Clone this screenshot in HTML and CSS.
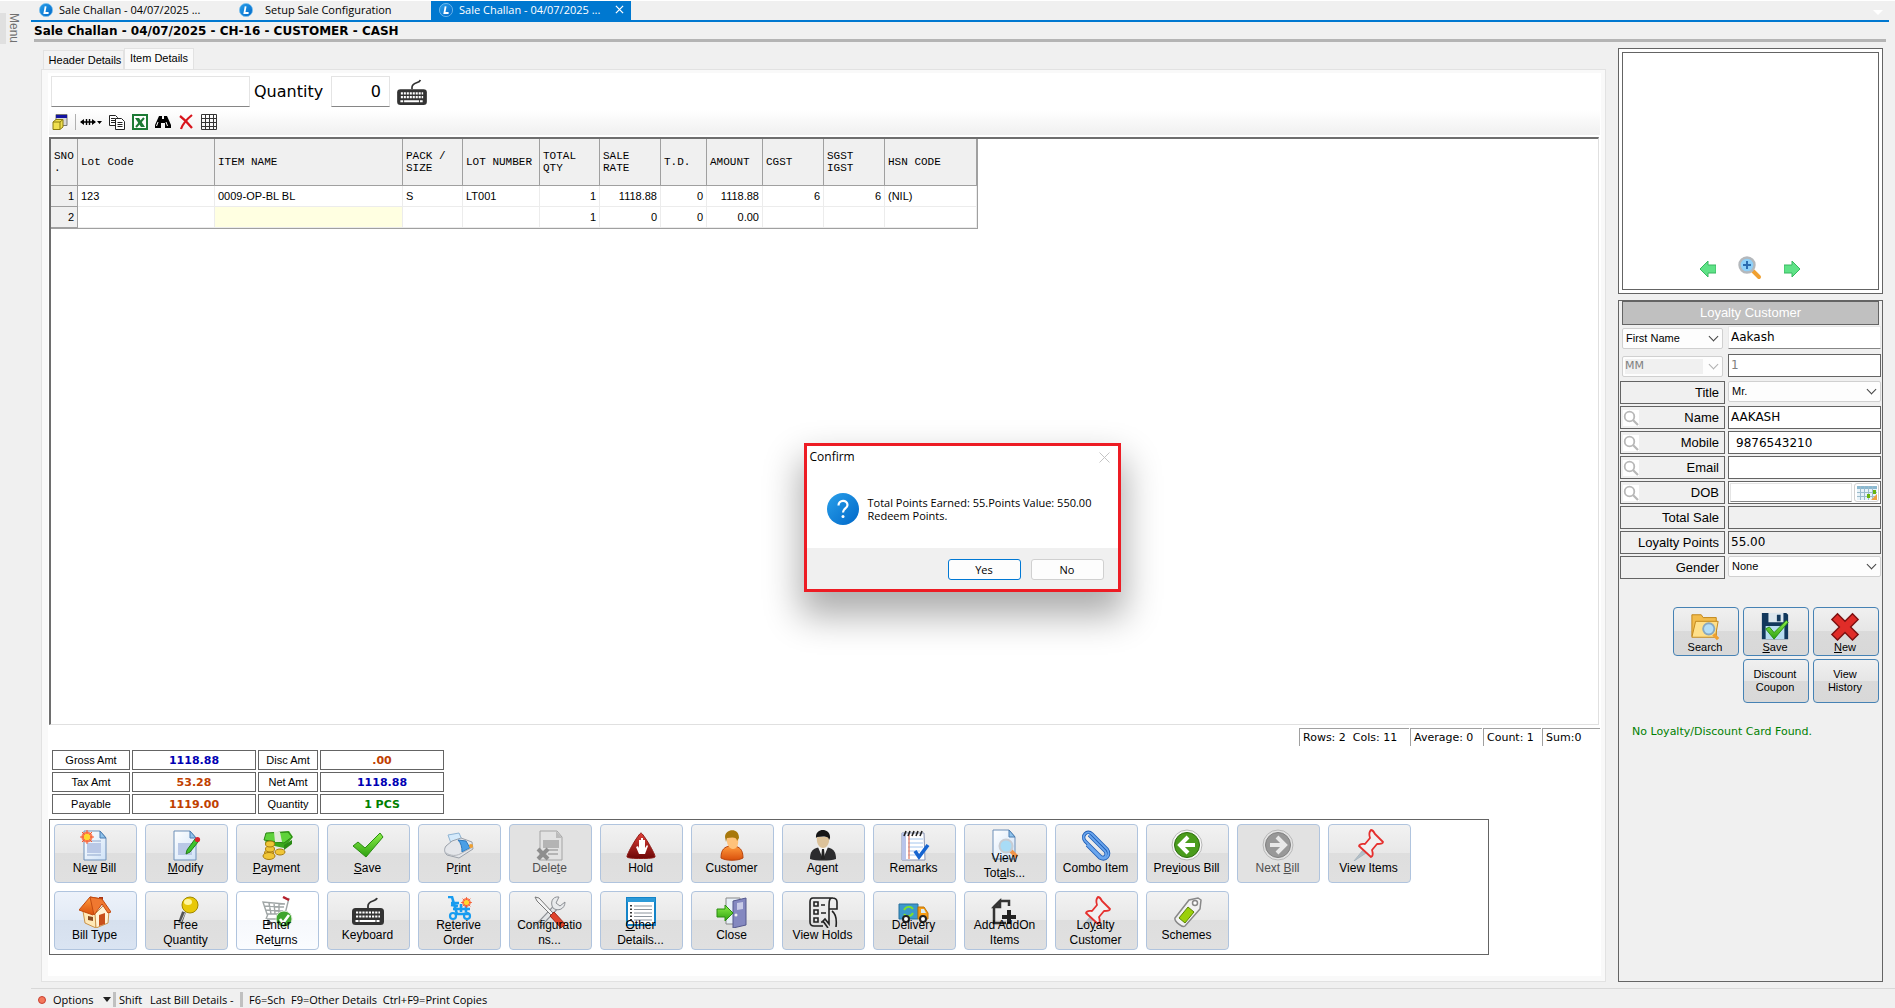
FILE: index.html
```html
<!DOCTYPE html>
<html lang="en">
<head>
<meta charset="utf-8">
<title>Sale Challan</title>
<link rel="stylesheet" href="styles.css">
</head>
<body>
<svg class="defs" width="0" height="0" aria-hidden="true">
  <defs>
    <linearGradient id="blueBall" x1="0" y1="0" x2="1" y2="1"><stop offset="0" stop-color="#2aa0ea"/><stop offset="1" stop-color="#0067c8"/></linearGradient>
    <linearGradient id="page" x1="0" y1="0" x2="1" y2="1"><stop offset="0" stop-color="#ffffff"/><stop offset="1" stop-color="#cfe2f7"/></linearGradient>
    <linearGradient id="orange" x1="0" y1="0" x2="0" y2="1"><stop offset="0" stop-color="#ff9a3c"/><stop offset="1" stop-color="#d94f0c"/></linearGradient>
    <linearGradient id="green" x1="0" y1="0" x2="0" y2="1"><stop offset="0" stop-color="#8df04a"/><stop offset="1" stop-color="#2da010"/></linearGradient>
    <linearGradient id="darkred" x1="0" y1="0" x2="0" y2="1"><stop offset="0" stop-color="#e04038"/><stop offset="1" stop-color="#6c0606"/></linearGradient>
    <symbol id="app" viewBox="0 0 14 14"><circle cx="7" cy="7" r="6.6" fill="url(#blueBall)" stroke="#7cc0ee" stroke-width=".8"/><path d="M6.6 3.4 5.4 10h4.2" fill="none" stroke="#fff" stroke-width="1.8"/></symbol>
    <symbol id="keyboard" viewBox="0 0 32 28"><path d="M25 1c-1 4-9 2-9 8v2" fill="none" stroke="#333" stroke-width="1.8"/><rect y="11" width="32" height="17" rx="3.5" fill="#333"/><path d="M4 15.5h24M4 19.500h24" stroke="#fff" stroke-width="2.200" stroke-dasharray="2.200 1"/><path d="M3.500 24h25" stroke="#fff" stroke-width="2" stroke-dasharray="3 1 16 1"/></symbol>
    <symbol id="pin" viewBox="0 0 32 32"><path d="M10 21 1 32l12-8z" fill="#b4c0c8" stroke="#a9b6bf"/><path d="M18 1c2 0 3 2 4 4l8 8c0 2-4 2-6 2l-5 6c1 3 1 6-1 7L6 17c1-3 4-2 6-2l5-6c-1-3-1-6 1-8z" fill="#f1f1f1" stroke="#e5302e" stroke-width="1.800" stroke-linejoin="round"/></symbol>
    <symbol id="lens" viewBox="0 0 16 16"><circle cx="6.500" cy="6.500" r="4.800" fill="#fff" stroke="#b8b8b8" stroke-width="1.800"/><path d="m10 10 5 5" stroke="#b8b8b8" stroke-width="2.200"/></symbol>
    <symbol id="spark" viewBox="0 0 14 14"><circle cx="7" cy="7" r="5.600" fill="#ff6a3a" opacity=".85"/><path d="M7 0v14M0 7h14M2 2l10 10M12 2 2 12" stroke="#f4562c" stroke-width="1"/><circle cx="7" cy="7" r="3.200" fill="#ffd82e"/></symbol>
  </defs>
</svg>

<nav class="rail"><button type="button" class="rail-button">Menu</button></nav>

<div class="workspace">
  <div class="doc-tabs" role="tablist">
    <button type="button" role="tab" class="doc-tab"><svg class="app-icon"><use href="#app"/></svg>Sale Challan - 04/07/2025 ...</button>
    <button type="button" role="tab" class="doc-tab doc-tab-wide"><svg class="app-icon"><use href="#app"/></svg>Setup Sale Configuration</button>
    <button type="button" role="tab" class="doc-tab active" aria-selected="true"><svg class="app-icon"><use href="#app"/></svg>Sale Challan - 04/07/2025 ...<svg class="tab-close" viewBox="0 0 10 10"><path d="m1 1 8 8M9 1 1 9" stroke="#fff" stroke-width="1.400"/></svg></button>
    <button type="button" class="tab-list" aria-label="Open windows"></button>
  </div>
  <h1 class="doc-title">Sale Challan - 04/07/2025 - CH-16 - CUSTOMER - CASH</h1>

  <div class="columns">
    <main class="main">
      <div class="page-tabs" role="tablist">
        <button type="button" role="tab" class="page-tab">Header Details</button>
        <button type="button" role="tab" class="page-tab active" aria-selected="true">Item Details</button>
      </div>
      <div class="panel"><div class="sheet">
        <div class="entry">
          <input class="entry-code" type="text" aria-label="Item code">
          <label for="qty">Quantity</label>
          <input class="entry-qty" id="qty" type="text" value="0">
          <svg class="entry-keyboard"><use href="#keyboard"/></svg>
        </div>
        <div class="tools">
          <svg class="tool" viewBox="0 0 16 16"><path d="M4 .5h11v11H4z" fill="#d8d8d8" stroke="#777"/><path d="M4 1h11v3H4z" fill="#1414a0"/><path d="m1 8 3-2.500h7V13l-3 2.500H1z" fill="#f0e050" stroke="#8a7c10"/><path d="M1 8h7l3-2.500M8 8v7" fill="none" stroke="#8a7c10"/></svg>
          <span class="tools-rule"></span>
          <svg class="tool tool-wide" viewBox="0 0 22 16"><path d="M1 8h14M6.500 5v6M9.500 5v6" stroke="#000" stroke-width="1.400"/><path d="m0 8 4-3v6zM16 8l-4-3v6zM17 7h5l-2.500 3z"/></svg>
          <svg class="tool" viewBox="0 0 16 16" fill="#fff" stroke="#222"><path d="M.5 1.500h6l2 2v8h-8z"/><path d="M2 4.500h4M2 6.500h4M2 8.500h4"/><path d="M6.500 4.500h6l3 3v8h-9z"/><path d="M8.500 8.500h5M8.500 10.500h5M8.500 12.500h5"/></svg>
          <svg class="tool" viewBox="0 0 16 16"><path d="M1 1h14v14H1z" fill="#fff" stroke="#1d7a35" stroke-width="2"/><path d="M3 4h4l6 9H9z" fill="#1d7a35"/><path d="m12 4-8 9" stroke="#1d7a35" stroke-width="2"/></svg>
          <svg class="tool" viewBox="0 0 16 16"><path d="M4 2h3v3h2V2h3l4 9v3h-6V9H6v5H0v-3z"/><path d="m3 8-1.500 4M11 8l1.500 4" stroke="#fff"/></svg>
          <svg class="tool" viewBox="0 0 16 16"><path d="M2 2c4 3 8 7 12 12M14 1C9 5 5 9 3 15" fill="none" stroke="#d8141c" stroke-width="2.200"/></svg>
          <svg class="tool" viewBox="0 0 16 16" fill="none" stroke="#333"><path d="M.5.5h15v15H.5zM4.500 0v16M8.500 0v16M12.500 0v16M0 4.500h16M0 8.500h16M0 12.500h16"/></svg>
        </div>
        <div class="grid">
          <table class="items">
            <colgroup><col class="w-sno"><col class="w-code"><col class="w-name"><col class="w-60"><col class="w-lot"><col class="w-60"><col class="w-61"><col class="w-td"><col class="w-amt"><col class="w-61"><col class="w-61"><col class="w-hsn"></colgroup>
            <thead><tr><th>SNO<br>.</th><th>Lot Code</th><th>ITEM NAME</th><th>PACK /<br>SIZE</th><th>LOT NUMBER</th><th>TOTAL<br>QTY</th><th>SALE<br>RATE</th><th>T.D.</th><th>AMOUNT</th><th>CGST</th><th>SGST<br>IGST</th><th>HSN CODE</th></tr></thead>
            <tbody>
              <tr><th>1</th><td>123</td><td>0009-OP-BL BL</td><td>S</td><td>LT001</td><td class="num">1</td><td class="num">1118.88</td><td class="num">0</td><td class="num">1118.88</td><td class="num">6</td><td class="num">6</td><td>(NIL)</td></tr>
              <tr><th>2</th><td></td><td class="current"></td><td></td><td></td><td class="num">1</td><td class="num">0</td><td class="num">0</td><td class="num">0.00</td><td></td><td></td><td></td></tr>
            </tbody>
          </table>
        </div>
        <div class="grid-status"><span class="s-rows">Rows: 2&nbsp; Cols: 11</span><span class="s-avg">Average: 0</span><span class="s-count">Count: 1</span><span class="s-sum">Sum:0</span></div>
        <dl class="totals">
          <dt>Gross Amt</dt><dd class="blue">1118.88</dd><dt>Disc Amt</dt><dd class="rust">.00</dd>
          <dt>Tax Amt</dt><dd class="rust">53.28</dd><dt>Net Amt</dt><dd class="blue">1118.88</dd>
          <dt>Payable</dt><dd class="rust">1119.00</dd><dt>Quantity</dt><dd class="green">1 PCS</dd>
        </dl>
        <div class="actions">
          <button type="button" class="action"><svg viewBox="0 0 32 32"><path d="M5 2h16l6 7v22H5z" fill="url(#page)" stroke="#6d8fb8"/><path d="M21 2v7h6z" fill="#8fc3ec" stroke="#4c7db0"/><path d="M8 14h14v10H8z" fill="#b9c8e6"/><path d="M8 12h14M8 26h14" stroke="#8fa6cc"/><use href="#spark" x="1" y="1" width="14" height="14"/></svg><span>Ne<u>w</u> Bill</span></button>
          <button type="button" class="action"><svg viewBox="0 0 32 32"><path d="M4 2h16l6 7v22H4z" fill="url(#page)" stroke="#6d8fb8"/><path d="M20 2v7h6z" fill="#8fc3ec" stroke="#4c7db0"/><path d="M8 14h14v12H8z" fill="#b9c8e6"/><path d="m17 21 8-11 3 3-8 10-4 2z" fill="#3fc32c" stroke="#237a18"/><circle cx="27.500" cy="10.500" r="2.600" fill="#d8262c"/></svg><span><u>M</u>odify</span></button>
          <button type="button" class="action"><svg viewBox="0 0 32 32"><path d="M6 4 28 2l4 6-9 11-19-4z" fill="#3aa81c"/><path d="m5 4 22-1 4 5-8 6-20-3z" fill="#5ed23a" stroke="#2a8414"/><path d="m13 3 6 0 2 10-7 0z" fill="#e0ead8"/><path d="m23 16 8-5v4l-8 6z" fill="#2a8a14"/><g fill="#f0c638" stroke="#a87c10"><ellipse cx="8" cy="24" rx="4.500" ry="3"/><ellipse cx="9" cy="20" rx="4.500" ry="3"/><ellipse cx="9" cy="15" rx="4.500" ry="3"/><ellipse cx="19" cy="23" rx="5" ry="3"/><ellipse cx="8" cy="27" rx="6" ry="3.500"/></g></svg><span><u>P</u>ayment</span></button>
          <button type="button" class="action"><svg viewBox="0 0 32 32"><path d="m1 17 5-4 7 6L28 4l3 4-17 20z" fill="url(#green)" stroke="#2b8c12"/></svg><span><u>S</u>ave</span></button>
          <button type="button" class="action"><svg viewBox="0 0 32 32"><path d="M5 6 16 4l4 9-11 4z" fill="#d4eafb" stroke="#8fb4d4"/><path d="M3 17 9 12l9-3 11 4 1 7-14 9-12-3c-3-3-3-6-1-9z" fill="#e4e6ea" stroke="#9aa0a9"/><path d="m15 11 8 1 4 7-8 4c0-5-1-9-4-12z" fill="#4b9fe6" stroke="#2c78bc"/><path d="M3 24c5 3 10 3 14 1l13-7" fill="none" stroke="#b0b4ba"/><circle cx="28" cy="17" r="2" fill="#f0a030"/></svg><span>P<u>r</u>int</span></button>
          <button type="button" class="action" disabled><svg viewBox="0 0 32 32"><path d="M6 2h17l5 6v23H6z" fill="#e2e2e2" stroke="#a4a4a4"/><path d="M22 2v7h6z" fill="#bbb"/><path d="M10 12h14v6H10zM14 21h10M14 25h10" fill="#b4b4b4" stroke="#b4b4b4" stroke-width="2"/><path d="m4 20 10 10M14 20 4 30" stroke="#8e8e8e" stroke-width="4"/></svg><span>Dele<u>t</u>e</span></button>
          <button type="button" class="action"><svg viewBox="0 0 32 32"><path d="M16 4c2 0 15 22 14 24s-27 2-28 0S14 4 16 4z" fill="url(#darkred)" stroke="#8c1a16"/><path d="m11 18 2-1 1 2v-8l2 0v-2h2v2l2 0v8l2-3 1 1-3 8h-6z" fill="#fff"/></svg><span>Hold</span></button>
          <button type="button" class="action"><svg viewBox="0 0 32 32"><path d="M5 29c0-8 3-12 11-12s11 4 11 12c-5 3-17 3-22 0z" fill="url(#orange)" stroke="#b8440c"/><path d="M11 8c-1 7 2 12 6 12s6-4 5-12z" fill="#ffc27a"/><path d="M9 8c0-8 14-10 14 1l-2 3c0-4-4-4-10-3l-1 4z" fill="#a8780c"/></svg><span>Customer</span></button>
          <button type="button" class="action"><svg viewBox="0 0 32 32"><path d="M3 30c0-7 2-12 13-12s13 5 13 12c-6 2-20 2-26 0z" fill="#2c2c2e"/><path d="m11 18 5 12 5-12z" fill="#f4f4f4"/><path d="m15 20-1 10h4l-1-10z" fill="#222"/><path d="M10 8c-1 6 2 11 6 11s7-5 6-11z" fill="#dcc29a"/><path d="M9 9c-1-11 15-10 14 0l-1 2c0-4-5-4-12-3z" fill="#161616"/></svg><span>Agent</span></button>
          <button type="button" class="action"><svg viewBox="0 0 32 32"><path d="M4 4h22l1 27H4z" fill="#fff" stroke="#8794b4"/><path d="M4 4v27h4V4z" fill="#b8c4ea"/><path d="M10 10h15M10 14h15M10 18h15M10 22h12M10 26h12" stroke="#a4c6ee"/><path d="M11 5v25" stroke="#e05a3c"/><path d="M6 7 8 2M10 7l2-5M14 7l2-5M18 7l2-5M22 7l2-5" stroke="#222" stroke-width="1.600"/><path d="m17 22 4 6 9-12" fill="none" stroke="#1564d0" stroke-width="3.600"/></svg><span>Remarks</span></button>
          <button type="button" class="action two"><svg viewBox="0 0 32 32"><path d="M4 1h16l6 7v22H4z" fill="url(#page)" stroke="#6d8fb8"/><path d="M20 1v7h6z" fill="#8fc3ec" stroke="#4c7db0"/><path d="m21 21 7 7" stroke="#f0944a" stroke-width="4"/><circle cx="17" cy="17" r="6.500" fill="#a8dcf6" stroke="#c8ccd2" stroke-width="2"/></svg><span>View<br>Tot<u>a</u>ls...</span></button>
          <button type="button" class="action"><svg viewBox="0 0 32 32" fill="none"><path d="m9 6 16 16c3 4-1 9-5 5L5 12C1 7 7 0 12 5l15 15c4 6-1 12-7 9L7 16" stroke="#1e5cb4" stroke-width="3.400"/><path d="m9 6 16 16c3 4-1 9-5 5L5 12C1 7 7 0 12 5l15 15c4 6-1 12-7 9L7 16" stroke="#6aa6ee" stroke-width="1.800"/></svg><span>Combo Item</span></button>
          <button type="button" class="action"><svg viewBox="0 0 32 32"><circle cx="16" cy="16" r="15" fill="#f8f8f8" stroke="#b8b8b8"/><circle cx="16" cy="16" r="12.500" fill="#4a9c1c" stroke="#2c6e0c"/><path d="m17 8-8 8 8 8M10 16h14" fill="none" stroke="#fff" stroke-width="4"/></svg><span>Pre<u>v</u>ious Bill</span></button>
          <button type="button" class="action" disabled><svg viewBox="0 0 32 32"><circle cx="16" cy="16" r="15" fill="#e4e4e4" stroke="#b8b8b8"/><circle cx="16" cy="16" r="12.500" fill="#989898" stroke="#808080"/><path d="m15 8 8 8-8 8M22 16H8" fill="none" stroke="#e8e8e8" stroke-width="4"/></svg><span>Next <u>B</u>ill</span></button>
          <button type="button" class="action"><svg viewBox="0 0 32 32"><use href="#pin"/></svg><span>View Items</span></button>
          <span></span>
          <button type="button" class="action tinted"><svg viewBox="0 0 32 32"><path d="M20 1h4v8h-4z" fill="#a83418"/><path d="m4 15 13 3v14L6 27z" fill="#ffe9b8" stroke="#c8924a"/><path d="m16 18 9-9 5 6-1 12-12 5z" fill="#fff3d6" stroke="#c8924a"/><path d="M0 14 11 1l12 2-9 16z" fill="url(#orange)" stroke="#c24a10"/><path d="m11 1 12 2 9 13-3 1-6-9-8 11z" fill="#f07830" stroke="#c24a10"/><path d="m20 19 6-2v11l-6 2z" fill="#c8501c"/><path d="m9 20 5 1v4l-5-1z" fill="#8a4a20"/></svg><span>Bill Type</span></button>
          <button type="button" class="action two"><svg viewBox="0 0 32 32"><path d="m14 16-4 11" stroke="#555" stroke-width="4"/><path d="m15 17-4 9" stroke="#ccc"/><circle cx="20" cy="9" r="8" fill="#e8c808" stroke="#a08800"/><ellipse cx="18" cy="6" rx="4" ry="3" fill="#fff6a0"/></svg><span>Free<br>Quantity</span></button>
          <button type="button" class="action two bright"><svg viewBox="0 0 32 32" fill="none"><path d="m28 2-4 16H6L2 6l22 2M3 10l20 1M5 14l17 1M8 7l2 11M13 7l1 11M18 8v10M6 23h15M7 18l-2 5" stroke="#a0a6a6" stroke-width="1.400"/><path d="m22 1 6 3" stroke="#b4202c" stroke-width="2.500"/><circle cx="23" cy="23" r="8" fill="#3fa52e" stroke="#d8e8d4"/><path d="m19 23 3 4 6-8" stroke="#fff" stroke-width="2.600"/><circle cx="8" cy="27" r="2" fill="#333"/></svg><span>Enter<br>Ret<u>u</u>rns</span></button>
          <button type="button" class="action"><svg viewBox="0 0 32 32"><use href="#keyboard" y="1" width="32" height="28"/></svg><span>Keyboard</span></button>
          <button type="button" class="action two"><svg viewBox="0 0 32 32" fill="none"><path d="M5 1h4l5 17h12M8 7h8M10 13h17M8 9l7 1M18 8v8M23 8v8" stroke="#189cf0" stroke-width="2.600"/><circle cx="10" cy="20" r="3" stroke="#189cf0" stroke-width="2.200"/><circle cx="24" cy="20" r="3" stroke="#189cf0" stroke-width="2.200"/><use href="#spark" x="18" y="1" width="11" height="11"/></svg><span>R<u>e</u>terive<br>Order</span></button>
          <button type="button" class="action two"><svg viewBox="0 0 32 32" fill="none"><path d="m3 31 18-19" stroke="#8c8f94" stroke-width="6"/><path d="m3 31 18-19" stroke="#e2e4e6" stroke-width="3.500"/><path d="M25 1c-7-1-9 6-6 11 5 4 12 1 12-6l-5 4-4-3z" fill="#e8eaec" stroke="#8c8f94"/><path d="m1 1 4 1 14 15-2 2L3 5z" fill="#f4f4f4" stroke="#777"/><path d="m16 20 4-4 11 12-4 4z" fill="#e0442c" stroke="#a02818"/></svg><span>Confi<u>g</u>uratio<br>ns...</span></button>
          <button type="button" class="action two"><svg viewBox="0 0 32 32"><path d="M2 2h28v27H2z" fill="#fff" stroke="#1484c8" stroke-width="2"/><path d="M2 2h28v4H2z" fill="#2c9ad8"/><path d="M9 10h18M9 13.500h18M9 17h18M9 20.500h18M9 24h18" stroke="#8c949c"/><path d="M6 9v17" stroke="#333" stroke-width="2" stroke-dasharray="1.500 2"/></svg><span><u>O</u>ther<br>Details...</span></button>
          <button type="button" class="action"><svg viewBox="0 0 32 32"><path d="M10 2h14v26H10z" fill="#e8f0f8" stroke="#888"/><path d="M17 5 30 2v27l-13 3z" fill="#8488c0" stroke="#54588c"/><path d="m21 7 6-1v7l-6 1z" fill="#c8cbe8"/><circle cx="20" cy="19" r="1.500" fill="#eee"/><path d="M1 13h8V9l8 8-8 8v-4H1z" fill="url(#green)" stroke="#2b8c12"/></svg><span>Close</span></button>
          <button type="button" class="action"><svg viewBox="0 0 32 32" fill="none" stroke="#222" stroke-width="1.600"><path d="M26 2H6C3 2 3 4 3 6v20c0 3 1 4 4 4h9M25 2c-3 0-3 4-3 11h8V6c0-3-2-4-5-4zM22 13v15l-4-5-2 2 5 7M25 15c4 3 5 8 4 16"/><path d="M7 6h4v4H7zM7 14h4v4H7zM7 22h4v4H7zM14 9h4M14 17h5M14 26h3"/></svg><span>View Holds</span></button>
          <button type="button" class="action two"><svg viewBox="0 0 32 32"><path d="M1 8h19v15H1z" fill="#3c98cc" stroke="#28719c"/><path d="M20 11h6l4 6v6H20z" fill="#f59c14" stroke="#c07408"/><path d="M23 13h3l2 4h-5z" fill="#d8ecf6"/><path d="M6 14c2-4 7-4 9-1M15 17c-2 4-7 4-9 1" fill="none" stroke="#7ee02c" stroke-width="2"/><circle cx="8" cy="23" r="3" fill="#fff" stroke="#222" stroke-width="2"/><circle cx="25" cy="23" r="3" fill="#fff" stroke="#222" stroke-width="2"/></svg><span>Delivery<br>Detail</span></button>
          <button type="button" class="action two"><svg viewBox="0 0 32 32" fill="none" stroke="#333" stroke-width="2.500"><path d="M20 10V5h-9l-6 6v16h12"/><path d="M5 11h6V5z" fill="#444"/><path d="M20 14v14M13 21h14" stroke-width="4" stroke="#222"/></svg><span>Add AddOn<br>Items</span></button>
          <button type="button" class="action two"><svg viewBox="0 0 32 32"><use href="#pin"/></svg><span>Lo<u>y</u>alty<br>Customer</span></button>
          <button type="button" class="action"><svg viewBox="0 0 32 32"><path d="m4 22 14-18 9-2 3 2-1 9-15 17c-3 2-11-5-10-8z" fill="#f2f2f2" stroke="#888" stroke-width="1.500"/><path d="m8 22 9-11 6 5-9 11z" fill="#9bd00c" stroke="#5c8404"/><circle cx="24" cy="7" r="2.500" fill="#fff" stroke="#888" stroke-width="1.500"/></svg><span>Schemes</span></button>
        </div>
      </div></div>
    </main>

    <aside class="side">
      <div class="photo"><div class="photo-inner">
        <svg width="16" height="16" viewBox="0 0 16 16"><path d="M0 8 8 0v4h8v8H8v4z" fill="#5fe287" stroke="#38b860"/></svg>
        <svg width="24" height="24" viewBox="0 0 24 24"><path d="m15 15 6 6" stroke="#f0a030" stroke-width="4" stroke-linecap="round"/><circle cx="9" cy="9" r="7.500" fill="#8fd0f8" stroke="#b4b8bc" stroke-width="2.400"/><path d="M9 5v8M5 9h8" stroke="#2c6cb0" stroke-width="2"/></svg>
        <svg width="16" height="16" viewBox="0 0 16 16"><path d="M16 8 8 0v4H0v8h8v4z" fill="#5fe287" stroke="#38b860"/></svg>
      </div></div>
      <form class="loyalty">
        <h2>Loyalty Customer</h2>
        <div class="pair filter">
          <span class="pick"><select aria-label="Search field"><option>First Name</option></select></span>
          <input class="soft" type="text" aria-label="Search value" value="Aakash">
          <span class="pick off"><select aria-label="Prefix" disabled><option>MM</option></select></span>
          <input class="box" type="text" aria-label="Card number" value="1" disabled>
        </div>
        <div class="pair fields">
          <label for="title">Title</label><span class="pick"><select id="title"><option>Mr.</option></select></span>
          <label for="name"><svg class="lens"><use href="#lens"/></svg>Name</label><input class="box" id="name" type="text" value="AAKASH">
          <label for="mobile"><svg class="lens"><use href="#lens"/></svg>Mobile</label><input class="box inset" id="mobile" type="text" value="9876543210">
          <label for="email"><svg class="lens"><use href="#lens"/></svg>Email</label><input class="box" id="email" type="text">
          <label for="dob"><svg class="lens"><use href="#lens"/></svg>DOB</label><span class="box date"><input id="dob" type="text"><button type="button" aria-label="Pick date"><svg width="20" height="14" viewBox="0 0 20 14"><path d="M0 0h20v14H0z" fill="#e8f2f8"/><path d="M0 0h20v3H0z" fill="#8ab8d0"/><path d="M3.500 0v14M7.500 0v14M11.500 0v14M15.500 0v14M0 6.500h20M0 10.500h20" stroke="#9cbccc"/><path d="M10 8h3v4h-3zM16 4h3v4h-3z" fill="#68b40c"/><path d="m14 14 6-6v6z" fill="#f0a040"/></svg></button></span>
          <label for="sale">Total Sale</label><input class="box flat" id="sale" type="text" readonly>
          <label for="points">Loyalty Points</label><input class="box flat" id="points" type="text" value="55.00" readonly>
          <label for="gender">Gender</label><span class="pick"><select id="gender"><option>None</option></select></span>
        </div>
        <div class="side-actions">
          <button type="button" class="small first"><svg viewBox="0 0 32 32"><path d="M2 4h10l2 3h14v20H2z" fill="#f2bc4c" stroke="#c08418"/><path d="M6 11h24l-3 17H2z" fill="#ffe08a" stroke="#c08418"/><path d="m25 25 5 5" stroke="#f0a030" stroke-width="3.500"/><circle cx="20" cy="19" r="6" fill="#b4def8" stroke="#88a8c0" stroke-width="2"/></svg><span>Search</span></button>
          <button type="button" class="small"><svg viewBox="0 0 32 32"><path d="M2 2h26l2 2v26H2z" fill="#12385c"/><path d="M9 2h16v10H9z" fill="#dce6ee"/><path d="M18 4h4v7h-4z" fill="#12385c"/><path d="M6 16h20v14H6z" fill="#b8dcf0"/><path d="m6 19 4-2 5 6L28 10l2 2-15 18z" fill="url(#green)" stroke="#2b8c12"/></svg><span><u>S</u>ave</span></button>
          <button type="button" class="small"><svg viewBox="0 0 32 32"><path d="m8 3 8 8 8-8 6 6-8 8 8 8-6 6-8-8-8 8-6-6 8-8-8-8z" fill="#e02c28" stroke="#7c1010" stroke-width="1.500"/></svg><span><u>N</u>ew</span></button>
          <button type="button" class="small second">Discount<br>Coupon</button>
          <button type="button" class="small">View<br>History</button>
        </div>
        <p class="notice">No Loyalty/Discount Card Found.</p>
      </form>
    </aside>
  </div>

  <footer class="footer"><svg width="8" height="8"><circle cx="4" cy="4" r="3.500" fill="#f4785c" stroke="#c84030"/></svg><button type="button" class="options">Options</button><span class="shift">Shift</span><span class="last">Last Bill Details -</span><span class="keys">F6=Sch&nbsp; F9=Other Details&nbsp; Ctrl+F9=Print Copies</span></footer>
</div>

<div class="dialog" role="dialog" aria-labelledby="dlg-title">
  <div class="dialog-head"><h2 id="dlg-title">Confirm</h2><button type="button" class="dialog-close" aria-label="Close"><svg width="11" height="11" viewBox="0 0 11 11"><path d="m.5.5 10 10M10.500.5l-10 10" stroke="#c4c4c4"/></svg></button></div>
  <div class="dialog-body">
    <svg width="32" height="32" viewBox="0 0 32 32"><circle cx="16" cy="16" r="16" fill="url(#blueBall)"/><path d="M11.500 12.500c0-6 9-6 9-.5 0 3.500-4.500 3.500-4.500 7.500" fill="none" stroke="#fff" stroke-width="2.200"/><circle cx="16" cy="23.500" r="1.500" fill="#fff"/></svg>
    <p>Total Points Earned: 55.Points Value: 550.00<br>Redeem Points.</p>
  </div>
  <div class="dialog-foot"><button type="button" class="primary">Yes</button><button type="button">No</button></div>
</div>
</body>
</html>
```
FILE: styles.css
```css
* { box-sizing: border-box; }
body { margin: 0; min-height: 100vh; display: flex; border-top: 1px solid #fff; background: #f0f0f0; color: #000; font: 11px/15px "Liberation Sans", Arial, sans-serif; }
button, input, select { font: inherit; color: inherit; margin: 0; padding: 0; border: 0; border-radius: 0; background: none; }
h1, h2, p, dl, dd { margin: 0; }
svg { display: block; flex: none; }
.defs { position: absolute; }

/* left rail */
.rail { width: 31px; flex: none; padding-top: 12px; }
.rail-button { display: block; border-left: 6px solid #e0e0e0; height: 31px; line-height: 16px; writing-mode: vertical-rl; font-size: 12px; color: #707070; }

/* document tabs */
.workspace { flex: 1; min-width: 0; display: flex; flex-direction: column; }
.doc-tabs { display: flex; height: 21px; margin-right: 6px; border-bottom: 2px solid #0078d0; font: 11px/18px "Open Sans", sans-serif; }
.doc-tab { display: flex; align-items: center; gap: 6px; width: 200px; height: 19px; padding: 0 7px 2px 8px; white-space: nowrap; }
.doc-tab-wide { gap: 12px; }
.doc-tab.active { background: #0078d0; color: #fff; }
.app-icon { width: 14px; height: 14px; }
.tab-close { width: 9px; height: 9px; margin-left: auto; }
.tab-list { align-self: center; margin: 4px 6px 0 auto; border: 5px solid transparent; border-top-color: #fff; border-bottom: 0; }
.doc-title { margin: 0 9px 0 3px; height: 20px; border-bottom: 3px solid #b4b4b4; font: bold 12px/18px "DejaVu Sans", Verdana, sans-serif; }

.columns { flex: 1; display: flex; gap: 12px; padding: 6px 12px 6px 10px; }
.main { flex: 1; min-width: 0; display: flex; flex-direction: column; }
.page-tabs { display: flex; align-items: flex-end; height: 21px; padding-left: 2px; }
.page-tab { width: 81px; height: 19px; padding-left: 3px; border: 1px solid #e2e2e2; border-bottom: 0; background: #f3f3f3; white-space: nowrap; }
.page-tab.active { width: 70px; height: 21px; padding-left: 0; padding-bottom: 2px; background: #fafafa; }
.panel { flex: 1; display: flex; padding: 3px 4px 5px 6px; border: 1px solid #e2e2e2; background: #f9f9f9; }
.sheet { flex: 1; min-width: 0; display: flex; flex-direction: column; padding: 3px 1px 21px 1px; background: #fff; }

/* item entry */
.entry { display: flex; align-items: center; gap: 4px; height: 31px; padding-left: 2px; font: 16px/20px "DejaVu Sans", Verdana, sans-serif; }
.entry input { height: 31px; border: 1px solid #e4e4e4; border-bottom-color: #868686; background: #fff; }
.entry label { width: 73px; }
.entry-code { width: 199px; }
.entry-qty { width: 59px; padding-right: 8px; text-align: right; }
.entry-keyboard { width: 32px; height: 26px; margin-left: 2px; }
.tools { display: flex; align-items: center; gap: 7px; height: 25px; margin: 3px 0 2px; padding: 0 0 2px 3px; background: linear-gradient(#fff, #f0f0f0); }
.tool { width: 16px; height: 16px; }
.tool-wide { width: 22px; margin-left: -3px; }
.tools-rule { width: 1px; height: 16px; background: #b0b0b0; }

/* item grid */
.grid { flex: 1; min-height: 120px; margin-right: 1px; border: 2px solid #6e6e6e; border-width: 2px 1px 1px 2px; border-right-color: #e0e0e0; border-bottom-color: #e0e0e0; }
.items { table-layout: fixed; width: 927px; border-collapse: separate; border-spacing: 0; border-right: 1px solid #a0a0a0; border-bottom: 1px solid #a0a0a0; }
.items th, .items td { padding: 0 3px; border: 1px solid #ececec; border-width: 0 1px 1px 0; text-align: left; white-space: nowrap; font-weight: normal; }
.items th { background: #f0f0f0; border-color: #a0a0a0; }
.items thead th { height: 47px; font: 11px/12px "Liberation Mono", "Courier New", monospace; }
.items tbody tr { height: 21px; }
.items tbody th { text-align: right; }
.items td { background: #fff; }
.items .num { text-align: right; }
.items .current { background: #ffffe1; }
.w-sno { width: 27px; } .w-code { width: 137px; } .w-name { width: 188px; } .w-60 { width: 60px; } .w-61 { width: 61px; }
.w-lot { width: 77px; } .w-td { width: 46px; } .w-amt { width: 56px; } .w-hsn { width: 92px; }
.grid-status { display: flex; justify-content: flex-end; gap: 1px; margin-top: 3px; font: 11px/17px "DejaVu Sans", Verdana, sans-serif; white-space: nowrap; }
.grid-status span { padding-left: 3px; border: 1px solid #a0a0a0; border-width: 1px 0 0 1px; }
.s-rows { width: 110px; } .s-avg { width: 72px; } .s-count { width: 58px; } .s-sum { width: 58px; }

.totals { display: grid; grid-template-columns: 78px 124px 60px 124px; grid-auto-rows: 20px; gap: 2px; margin: 4px 0 5px 3px; text-align: center; line-height: 18px; }
.totals dt, .totals dd { border: 1px solid #646464; }
.totals dd { font: bold 11px/19px "DejaVu Sans", Verdana, sans-serif; }
.blue { color: #0000b4; } .rust { color: #c04000; } .green { color: #008000; }

/* action buttons */
.actions { display: grid; grid-template-columns: repeat(16, 83px); gap: 8px; width: 1440px; max-width: 100%; padding: 4px; border: 1px solid #646464; }
.action { display: flex; flex-direction: column; align-items: center; height: 59px; padding: 4px 2px 0 0; border: 1px solid #b0c4de; border-radius: 4px; background: linear-gradient(#f2f2f2, #e8e8e8 49%, #dedede 50%, #e0e0e0); font-size: 12px; line-height: 15px; white-space: nowrap; }
.action svg { width: 32px; height: 32px; }
.action.two span { margin-top: -10px; }
.action:disabled { color: #505050; background: #e2e2e2; }
.action.tinted { background: linear-gradient(#edf2fa, #e2eaf5 49%, #d6e0ee 50%, #dae4f2); }
.action.bright { background: linear-gradient(#fff, #fff 49%, #f6f8fc 50%, #fafcff); }

/* right column */
.side { width: 265px; flex: none; display: flex; flex-direction: column; gap: 6px; }
.photo { height: 246px; padding: 3px; border: 1px solid #646464; background: #fff; }
.photo-inner { display: flex; align-items: flex-end; justify-content: center; gap: 22px; height: 100%; padding: 0 2px 9px 0; border: 1px solid #646464; }
.photo-inner svg:nth-child(odd) { margin-bottom: 3px; }
.loyalty { flex: 1; padding: 0 1px; border: 1px solid #646464; }
.loyalty h2 { height: 24px; margin: 0 2px; border: 1px solid #646464; background: #c0c0c0; color: #fff; font-size: 13px; font-weight: normal; line-height: 22px; text-align: center; }
.pair { display: grid; grid-template-columns: 105px 1fr; column-gap: 3px; row-gap: 2px; }
.filter { grid-template-columns: 101px 1fr; column-gap: 5px; row-gap: 5px; padding: 1px 0 4px 2px; }
.pair input { width: 100%; height: 23px; padding: 0 2px 2px; font: 12px/16px "DejaVu Sans", Verdana, sans-serif; }
.soft, .date { background: #fff; }
.soft { border: 1px solid #e8e8e8; border-bottom-color: #868686; }
.box { min-width: 0; border: 1px solid #646464; background: #fff; }
.pair .inset { padding: 0 7px; }
.box:disabled { color: #808080; }
.box.flat { background: #f0f0f0; }
.pick { position: relative; height: 21px; }
.filter .pick { margin-top: 2px; }
.pick select { appearance: none; width: 100%; height: 21px; padding: 0 3px; border: 1px solid #d0d0d0; border-radius: 2px; background: #fdfdfd; }
.pick::after { content: ""; position: absolute; right: 6px; top: 5px; width: 6px; height: 6px; border: 1px solid #444; border-width: 0 1px 1px 0; transform: rotate(45deg); }
.pick.off select { padding: 0 2px 2px; color: #808080; background: linear-gradient(#f0f0f0, #f0f0f0) 2px 2px / 78px 15px no-repeat #fdfdfd; opacity: 1; font: 11px/15px "DejaVu Sans", Verdana, sans-serif; }
.pick.off::after { border-color: #b0b0b0; }
.fields label { display: flex; align-items: center; justify-content: flex-end; height: 23px; padding: 0 5px 0 2px; border: 1px solid #646464; font-size: 13px; }
.lens { width: 16px; height: 16px; margin-right: auto; background: #fff; }
.date { display: flex; height: 23px; padding: 1px; }
.pair .date input { flex: 1; min-width: 0; height: 19px; border: 1px solid #e4e4e4; border-bottom-color: #868686; }
.date button { display: grid; place-items: center; width: 25px; height: 19px; margin-left: 2px; border: 1px solid #d0d0d0; border-radius: 3px; }
.side-actions { display: grid; grid-template-columns: repeat(3, 66px); justify-content: end; gap: 3px 4px; margin: 28px 2px 0 0; }
.small { display: flex; flex-direction: column; align-items: center; height: 49px; padding: 3px 2px 0 0; border: 1px solid #4682b4; border-radius: 4px; background: linear-gradient(#f0f0f0, #e6e6e6 49%, #dadada 50%, #d8d8d8); line-height: 13px; }
.small svg { width: 30px; height: 30px; }
.small.second { grid-column: 2; }
.small.second, .small.second + .small { display: block; height: 44px; padding: 0 2px 0 0; }
.notice { margin: 20px 0 0 12px; color: #008000; font: 11px/17px "DejaVu Sans", Verdana, sans-serif; }

.footer { display: flex; align-items: center; height: 20px; padding: 2px 0 0 7px; border-top: 1px solid #d8d8d8; font: 11px/15px "Open Sans", sans-serif; white-space: nowrap; }
.options { display: flex; align-items: center; justify-content: space-between; width: 67px; padding: 0 2px 0 7px; }
.options::after { content: ""; border: 4px solid transparent; border-top: 5px solid #222; border-bottom: 0; }
.shift { width: 37px; padding-left: 3px; border-left: 3px solid #c0c0c0; }
.last { width: 90px; }
.keys { padding-left: 6px; border-left: 3px solid #c0c0c0; }

/* confirmation window, floats over the page */
.dialog { position: absolute; left: calc(50% - 144px); top: calc(50% - 61px); width: 317px; border: 3px solid #ed1c24; background: #fff; box-shadow: 0 20px 34px 4px rgba(0, 0, 0, .32); font: 11px/13px "Open Sans", sans-serif; }
.dialog-head { display: flex; justify-content: space-between; align-items: center; height: 22px; padding: 0 8px 0 3px; }
.dialog-head h2 { font-size: 12px; font-weight: normal; line-height: 16px; }
.dialog-body { display: flex; gap: 9px; height: 80px; padding: 25px 0 0 20px; white-space: nowrap; }
.dialog-body p { padding-top: 3px; }
.dialog-foot { display: flex; justify-content: flex-end; gap: 10px; height: 41px; padding: 11px 14px 0 0; background: #f0f0f0; }
.dialog-foot button { width: 73px; height: 21px; border: 1px solid #d0d0d0; border-radius: 3px; background: #fdfdfd; }
.dialog-foot .primary { border-color: #0078d4; }
```
